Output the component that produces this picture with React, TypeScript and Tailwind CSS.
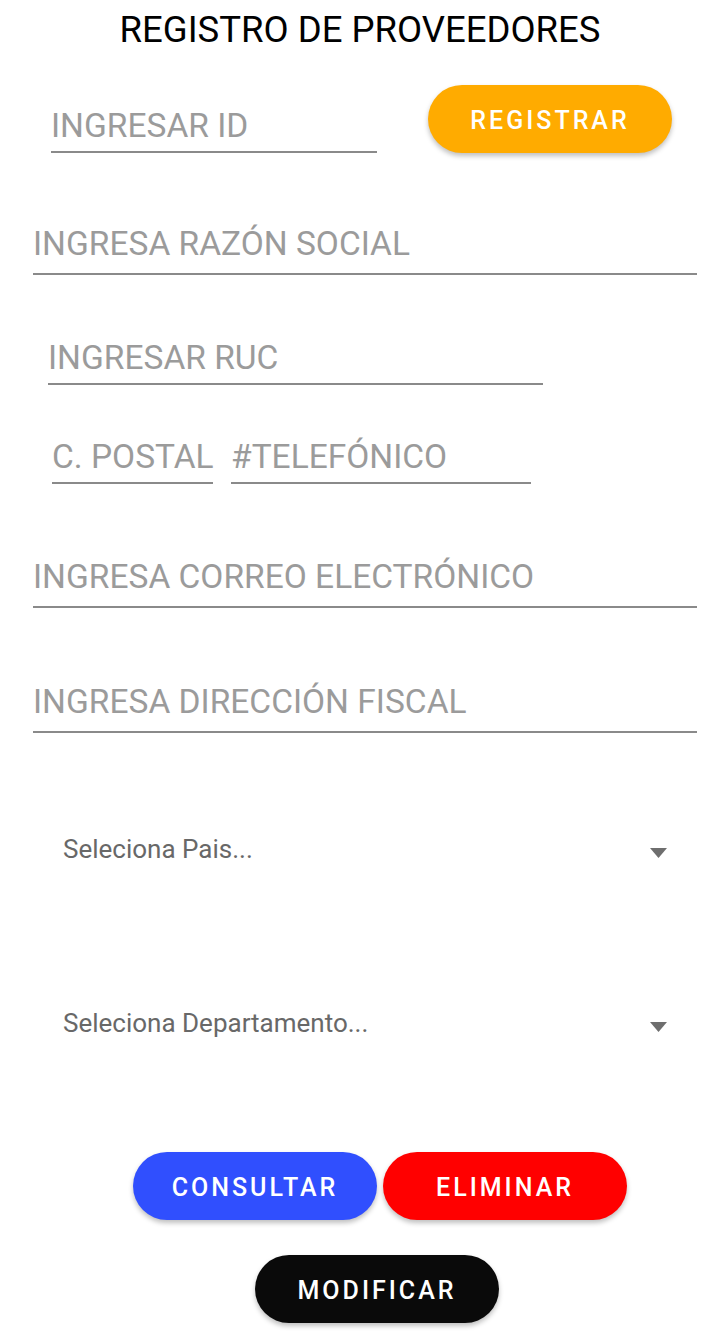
import React from 'react'

// Underlined text field, Android EditText style
function Field({
  label,
  className = '',
  pad = 'pb-[6px]',
}: {
  label: string
  className?: string
  pad?: string
}) {
  return (
    <div className={`border-b-2 border-[#8a8a8a] ${pad} ${className}`}>
      <div className="text-[33.5px] leading-[38px] text-[#9b9b9b] whitespace-nowrap">{label}</div>
    </div>
  )
}

function Select({ label, className = '' }: { label: string; className?: string }) {
  return (
    <div className={`flex items-start pl-[63px] pr-[53px] ${className}`}>
      <div className="flex-1 text-[26px] leading-[28px] text-[#686868]">{label}</div>
      <svg width="17" height="10" viewBox="0 0 17 10" className="mt-[13px]">
        <path d="M0 0 H17 L8.5 10 Z" fill="#6e6e6e" />
      </svg>
    </div>
  )
}

function PillButton({ label, color, className = '' }: { label: string; color: string; className?: string }) {
  return (
    <button
      className={`w-[244px] h-[68px] pt-[3px] rounded-full ${color} text-white text-[25px] font-medium tracking-[0.12em] shadow-[0_3px_5px_rgba(0,0,0,0.25)] ${className}`}
    >
      {label}
    </button>
  )
}

export default function App() {
  return (
    <div className="w-[720px] min-h-[1337px] bg-white font-['Roboto',sans-serif]">
      <h1 className="pt-[10px] text-center text-[36.5px] leading-[40px] text-black font-normal">
        REGISTRO DE PROVEEDORES
      </h1>

      {/* id + registrar */}
      <div className="mt-[35px] flex items-start pl-[51px]">
        <Field label="INGRESAR ID" className="w-[326px] mt-[22px]" />
        <PillButton label="REGISTRAR" color="bg-[#ffab00]" className="ml-[51px]" />
      </div>

      <Field label="INGRESA RAZÓN SOCIAL" pad="pb-[10px]" className="mt-[72px] ml-[33px] w-[664px]" />

      <Field label="INGRESAR RUC" className="mt-[64px] ml-[48px] w-[495px]" />

      <div className="mt-[53px] flex pl-[52px] gap-[18px]">
        <Field label="C. POSTAL" className="w-[161px]" />
        <Field label="#TELEFÓNICO" className="w-[300px]" />
      </div>

      <Field label="INGRESA CORREO ELECTRÓNICO" pad="pb-[10px]" className="mt-[74px] ml-[33px] w-[664px]" />

      <Field label="INGRESA DIRECCIÓN FISCAL" pad="pb-[10px]" className="mt-[75px] ml-[33px] w-[664px]" />

      <Select label="Seleciona Pais..." className="mt-[102px]" />

      <Select label="Seleciona Departamento..." className="mt-[146px]" />

      <div className="mt-[115px] flex gap-[6px] pl-[133px]">
        <PillButton label="CONSULTAR" color="bg-[#304ffe]" />
        <PillButton label="ELIMINAR" color="bg-[#ff0000]" />
      </div>

      <div className="mt-[35px] pl-[255px]">
        <PillButton label="MODIFICAR" color="bg-[#0a0a0a]" />
      </div>
    </div>
  )
}
